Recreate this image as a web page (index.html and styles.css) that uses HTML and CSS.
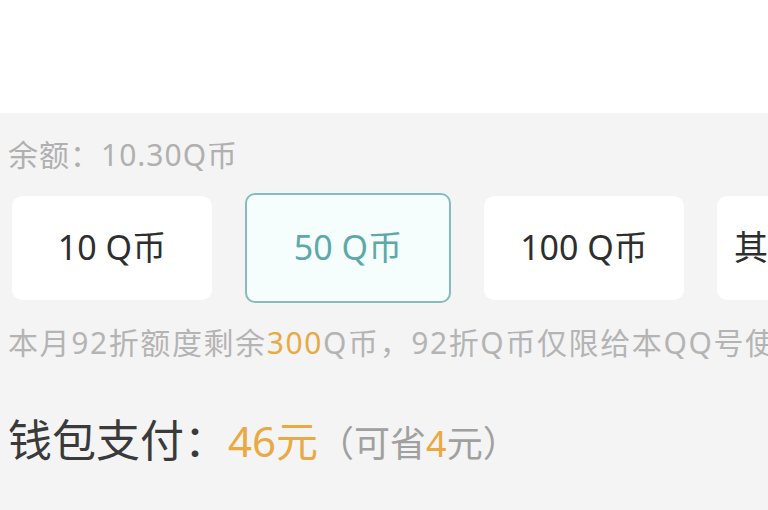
FILE: index.html
```html
<!DOCTYPE html>
<html lang="zh-CN">
<head>
<meta charset="utf-8">
<title>Q币充值</title>
<link rel="stylesheet" href="styles.css">
</head>
<body>
<div class="page">
  <div class="top"></div>
  <div class="content">
    <div class="balance">余额：10.30Q币</div>
    <div class="options">
      <div class="opt">10 Q币</div>
      <div class="opt selected">50 Q币</div>
      <div class="opt">100 Q币</div>
      <div class="opt">其他数额</div>
    </div>
    <div class="note">本月92折额度剩余<span class="hl">300</span>Q币，92折Q币仅限给本QQ号使用</div>
    <div class="pay">
      <span class="pay-label">钱包支付：</span><span class="pay-amount">46元</span><span class="pay-save">（可省<span class="hl">4</span>元）</span>
    </div>
  </div>
</div>
</body>
</html>
```

FILE: styles.css
```css
html, body {
  margin: 0;
  padding: 0;
}
body {
  width: 768px;
  height: 510px;
  overflow: hidden;
  background: #f4f4f4;
  font-family: "Noto Sans", "Noto Sans CJK SC", sans-serif;
}
.page {
  display: flex;
  flex-direction: column;
}
.top {
  height: 113px;
  background: #ffffff;
}
.content {
  padding: 22px 0 0 8px;
  display: flex;
  flex-direction: column;
  overflow: hidden;
}
.balance {
  font-size: 30px;
  letter-spacing: 1px;
  line-height: 40px;
  color: #b0b0b0;
}
.options {
  margin-top: 17px;
  margin-left: 4px;
  display: flex;
  align-items: center;
  gap: 33px;
  height: 112px;
}
.opt {
  flex: 0 0 200px;
  height: 104px;
  box-sizing: border-box;
  background: #ffffff;
  border-radius: 10px;
  display: flex;
  align-items: center;
  justify-content: center;
  padding-bottom: 6px;
  font-size: 34px;
  color: #2e2e2e;
  white-space: nowrap;
  overflow: hidden;
}
.opt:last-child {
  justify-content: flex-start;
  padding-left: 17px;
}
.opt.selected {
  flex-basis: 206px;
  height: 110px;
  border: 2px solid #86bcbc;
  background: #f6fdfd;
  color: #5ea9a8;
}
.note {
  margin-top: 19px;
  font-size: 30px;
  letter-spacing: 1.6px;
  line-height: 40px;
  color: #b4b4b4;
  white-space: nowrap;
  overflow: hidden;
}
.hl {
  color: #e9a943;
}
.pay {
  margin-top: 50px;
  display: flex;
  align-items: baseline;
  line-height: 54px;
  white-space: nowrap;
}
.pay-label {
  font-size: 44px;
  color: #3a3a3a;
}
.pay-amount {
  font-size: 42px;
  color: #e9a943;
}
.pay-save {
  font-size: 36px;
  color: #a0a0a0;
}
```
